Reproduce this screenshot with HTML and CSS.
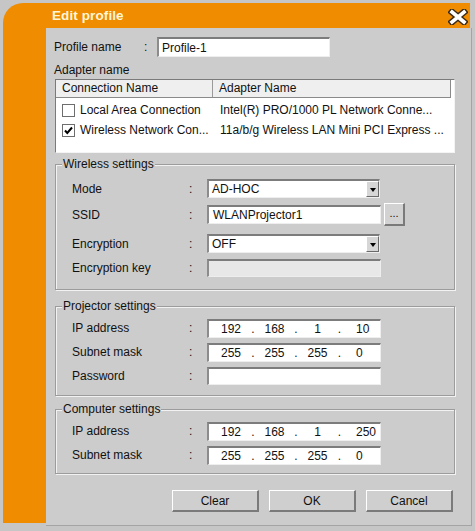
FILE: index.html
```html
<!DOCTYPE html>
<html>
<head>
<meta charset="utf-8">
<link rel="stylesheet" href="styles.css">
</head>
<body>
<div class="window">
  <div class="titlebar">
    <span class="title">Edit profile</span>
    <svg class="close" width="20" height="16" viewBox="0 0 20 16">
      <path d="M4 3 L16 13 M16 3 L4 13" stroke="#3b2b14" stroke-width="6.5" stroke-linecap="square" fill="none"/>
      <path d="M4 3 L16 13 M16 3 L4 13" stroke="#ffffff" stroke-width="3.6" stroke-linecap="square" fill="none"/>
    </svg>
  </div>
  <div class="main">
    <div class="strip"></div>
    <div class="panel">
      <div class="profile-row">
        <span class="plabel">Profile name</span>
        <span class="pcolon">:</span>
        <div class="field profile-input">Profile-1</div>
      </div>
      <div class="section-label">Adapter name</div>
      <div class="listview">
        <div class="lv-header">
          <div class="lv-h1">Connection Name</div>
          <div class="lv-h2">Adapter Name</div>
        </div>
        <div class="lv-row">
          <div class="lv-c1"><span class="cb"></span><span>Local Area Connection</span></div>
          <div class="lv-c2">Intel(R) PRO/1000 PL Network Conne...</div>
        </div>
        <div class="lv-row">
          <div class="lv-c1"><span class="cb"><svg width="11" height="11" viewBox="0 0 11 11"><polyline points="2,5.5 4.3,8 9,2.5" fill="none" stroke="#000" stroke-width="2"/></svg></span><span>Wireless Network Con...</span></div>
          <div class="lv-c2">11a/b/g Wireless LAN Mini PCI Express ...</div>
        </div>
      </div>

      <fieldset class="group group-wireless">
        <legend>Wireless settings</legend>
        <div class="form form-wireless">
          <span class="lbl">Mode</span><span class="col">:</span>
          <div class="field select"><span class="val">AD-HOC</span><span class="arrow"></span></div>

          <span class="lbl">SSID</span><span class="col">:</span>
          <div class="ssid-wrap"><div class="field text">WLANProjector1</div><div class="dots-btn">...</div></div>

          <span class="lbl">Encryption</span><span class="col">:</span>
          <div class="field select"><span class="val">OFF</span><span class="arrow"></span></div>

          <span class="lbl">Encryption key</span><span class="col">:</span>
          <div class="field disabled"></div>
        </div>
      </fieldset>

      <fieldset class="group group-projector">
        <legend>Projector settings</legend>
        <div class="form form-ip">
          <span class="lbl">IP address</span><span class="col">:</span>
          <div class="field ip"><span class="s1">192</span><span class="dot">.</span><span class="s2">168</span><span class="dot">.</span><span class="s3">1</span><span class="dot d3">.</span><span class="s4">10</span></div>

          <span class="lbl">Subnet mask</span><span class="col">:</span>
          <div class="field ip"><span class="s1">255</span><span class="dot">.</span><span class="s2">255</span><span class="dot">.</span><span class="s3">255</span><span class="dot d3">.</span><span class="s4">0</span></div>

          <span class="lbl">Password</span><span class="col">:</span>
          <div class="field pw"></div>
        </div>
      </fieldset>

      <fieldset class="group group-computer">
        <legend>Computer settings</legend>
        <div class="form form-ip">
          <span class="lbl">IP address</span><span class="col">:</span>
          <div class="field ip"><span class="s1">192</span><span class="dot">.</span><span class="s2">168</span><span class="dot">.</span><span class="s3">1</span><span class="dot d3">.</span><span class="s4">250</span></div>

          <span class="lbl">Subnet mask</span><span class="col">:</span>
          <div class="field ip"><span class="s1">255</span><span class="dot">.</span><span class="s2">255</span><span class="dot">.</span><span class="s3">255</span><span class="dot d3">.</span><span class="s4">0</span></div>
        </div>
      </fieldset>

      <div class="buttons">
        <div class="btn">Clear</div>
        <div class="btn">OK</div>
        <div class="btn">Cancel</div>
      </div>
    </div>
  </div>
</div>
</body>
</html>
```

FILE: styles.css
```css
html, body {
  margin: 0;
  padding: 0;
}
body {
  width: 475px;
  height: 531px;
  background: #c6c6c6;
  font-family: "Liberation Sans", Arial, sans-serif;
  font-size: 12px;
  color: #111;
  overflow: hidden;
}
.window {
  margin: 3px 0 0 3px;
  width: 469px;
}
.titlebar {
  height: 25px;
  margin-right: 2px;
  background: #ef8c00;
  border-top-left-radius: 20px;
  display: flex;
  align-items: center;
  justify-content: space-between;
}
.title {
  padding-left: 49px;
  font-weight: bold;
  font-size: 13.5px;
  color: #fff7d8;
  letter-spacing: 0.1px;
}
.close {
  margin-right: 2px;
  margin-top: 3px;
}
.main {
  display: flex;
  align-items: flex-start;
}
.strip {
  width: 43px;
  height: 495px;
  background: #ef8c00;
}
.panel {
  box-sizing: border-box;
  width: 426px;
  height: 498px;
  background: #cccccc;
  border-right: 1px solid #a4a4a4;
  border-bottom: 1px solid #a4a4a4;
  padding: 9px 0 0 8px;
}
.profile-row {
  display: flex;
  align-items: center;
  height: 20px;
}
.plabel {
  width: 90px;
}
.pcolon {
  width: 13px;
}
.field {
  box-sizing: border-box;
  height: 19px;
  background: #fff;
  border-top: 2px solid #7c7c7c;
  border-left: 2px solid #8c8c8c;
  border-right: 1px solid #eeeeee;
  border-bottom: 1px solid #eeeeee;
  display: flex;
  align-items: center;
  white-space: nowrap;
}
.profile-input {
  width: 173px;
  height: 20px;
  padding-left: 3px;
}
.section-label {
  margin-top: 5px;
  line-height: 16px;
  height: 16px;
}
.listview {
  box-sizing: border-box;
  margin: 1px 0 0 1px;
  width: 400px;
  height: 74px;
  background: #fff;
  border-top: 1px solid #7a7a7a;
  border-left: 1px solid #7a7a7a;
  border-right: 1px solid #f4f4f4;
  border-bottom: 1px solid #f4f4f4;
}
.lv-header {
  display: flex;
  width: 395px;
  height: 18px;
  box-sizing: border-box;
  background: #efefef;
  border-bottom: 1px solid #8a8a8a;
  border-right: 1px solid #8a8a8a;
  line-height: 17px;
}
.lv-h1 {
  box-sizing: border-box;
  width: 157px;
  padding-left: 6px;
  border-right: 1px solid #9a9a9a;
}
.lv-h2 {
  padding-left: 6px;
}
.lv-row {
  display: flex;
  height: 20px;
  align-items: center;
  white-space: nowrap;
}
.lv-row:first-of-type {
  margin-top: 0;
}
.lv-header + .lv-row {
  margin-top: 2px;
}
.lv-c1 {
  box-sizing: border-box;
  width: 157px;
  padding-left: 6px;
  display: flex;
  align-items: center;
  gap: 5px;
}
.lv-c2 {
  padding-left: 7px;
}
.cb {
  box-sizing: border-box;
  width: 13px;
  height: 13px;
  border: 1px solid #6e6e6e;
  background: #fff;
  display: flex;
  align-items: center;
  justify-content: center;
}
.cb svg {
  display: block;
}
.group {
  box-sizing: border-box;
  width: 400px;
  margin: 0 0 0 1px;
  padding: 0;
  border: 1px solid #9c9c9c;
  box-shadow: 1px 1px 0 #f2f2f2, inset 1px 1px 0 #f2f2f2;
  min-width: 0;
}
.group legend {
  margin-left: 6px;
  padding: 0 1px;
  line-height: 15px;
  background: #cccccc;
}
.group-wireless {
  margin-top: 4px;
}
.group-projector {
  margin-top: 9px;
}
.group-computer {
  margin-top: 6px;
}
.form {
  display: grid;
  grid-template-columns: 116px 19px 198px;
  align-items: center;
  margin-left: 16px;
}
.form-wireless {
  grid-template-rows: 25px 27px 31px 18px;
  padding: 4px 0 12px;
}
.group-projector .form-ip {
  grid-template-rows: 24px 24px 24px;
  padding: 2px 0 7px;
}
.group-computer .form-ip {
  grid-template-rows: 24px 24px;
  padding: 2px 0 6px;
}
.col {
  padding-left: 1px;
}
.select {
  width: 173px;
  padding-left: 3px;
  justify-content: space-between;
}
.select .val {
  flex: 1;
}
.arrow {
  box-sizing: border-box;
  width: 13px;
  height: 16px;
  background: #d6d6d6;
  border-top: 1px solid #ffffff;
  border-left: 1px solid #ffffff;
  border-right: 1px solid #6a6a6a;
  border-bottom: 1px solid #6a6a6a;
  display: flex;
  align-items: center;
  justify-content: center;
}
.arrow::after {
  content: "";
  width: 0;
  height: 0;
  border-left: 3.5px solid transparent;
  border-right: 3.5px solid transparent;
  border-top: 4px solid #000;
  margin-top: 1px;
}
.ssid-wrap {
  display: flex;
  align-items: center;
  gap: 3px;
}
.text {
  width: 174px;
  padding-left: 4px;
}
.dots-btn {
  box-sizing: border-box;
  width: 21px;
  height: 23px;
  background: #d2d2d2;
  border-top: 1px solid #ffffff;
  border-left: 1px solid #ffffff;
  border-right: 2px solid #7a7a7a;
  border-bottom: 2px solid #7a7a7a;
  display: flex;
  align-items: center;
  justify-content: center;
  font-size: 11px;
  line-height: 1;
  padding-bottom: 1px;
}
.disabled {
  width: 174px;
  height: 18px;
  background: #e8e8e8;
}
.pw {
  width: 174px;
  height: 18px;
}
.ip {
  width: 174px;
  padding-left: 2px;
}
.ip span {
  display: block;
  text-align: center;
}
.ip .s1 { width: 40px; }
.ip .s2 { width: 39px; }
.ip .s3 { width: 39px; }
.ip .dot { width: 4px; }
.ip .d3 { width: 5px; }
.ip .s4 {
  text-align: left;
  padding-left: 14px;
}
.buttons {
  box-sizing: border-box;
  width: 400px;
  margin: 16px 0 0 1px;
  padding-right: 2px;
  display: flex;
  justify-content: flex-end;
  gap: 10px;
}
.btn {
  box-sizing: border-box;
  width: 87px;
  height: 22px;
  background: #cfcfcf;
  border-top: 1px solid #ffffff;
  border-left: 1px solid #ffffff;
  border-right: 2px solid #7a7a7a;
  border-bottom: 2px solid #7a7a7a;
  display: flex;
  align-items: center;
  justify-content: center;
}
```
